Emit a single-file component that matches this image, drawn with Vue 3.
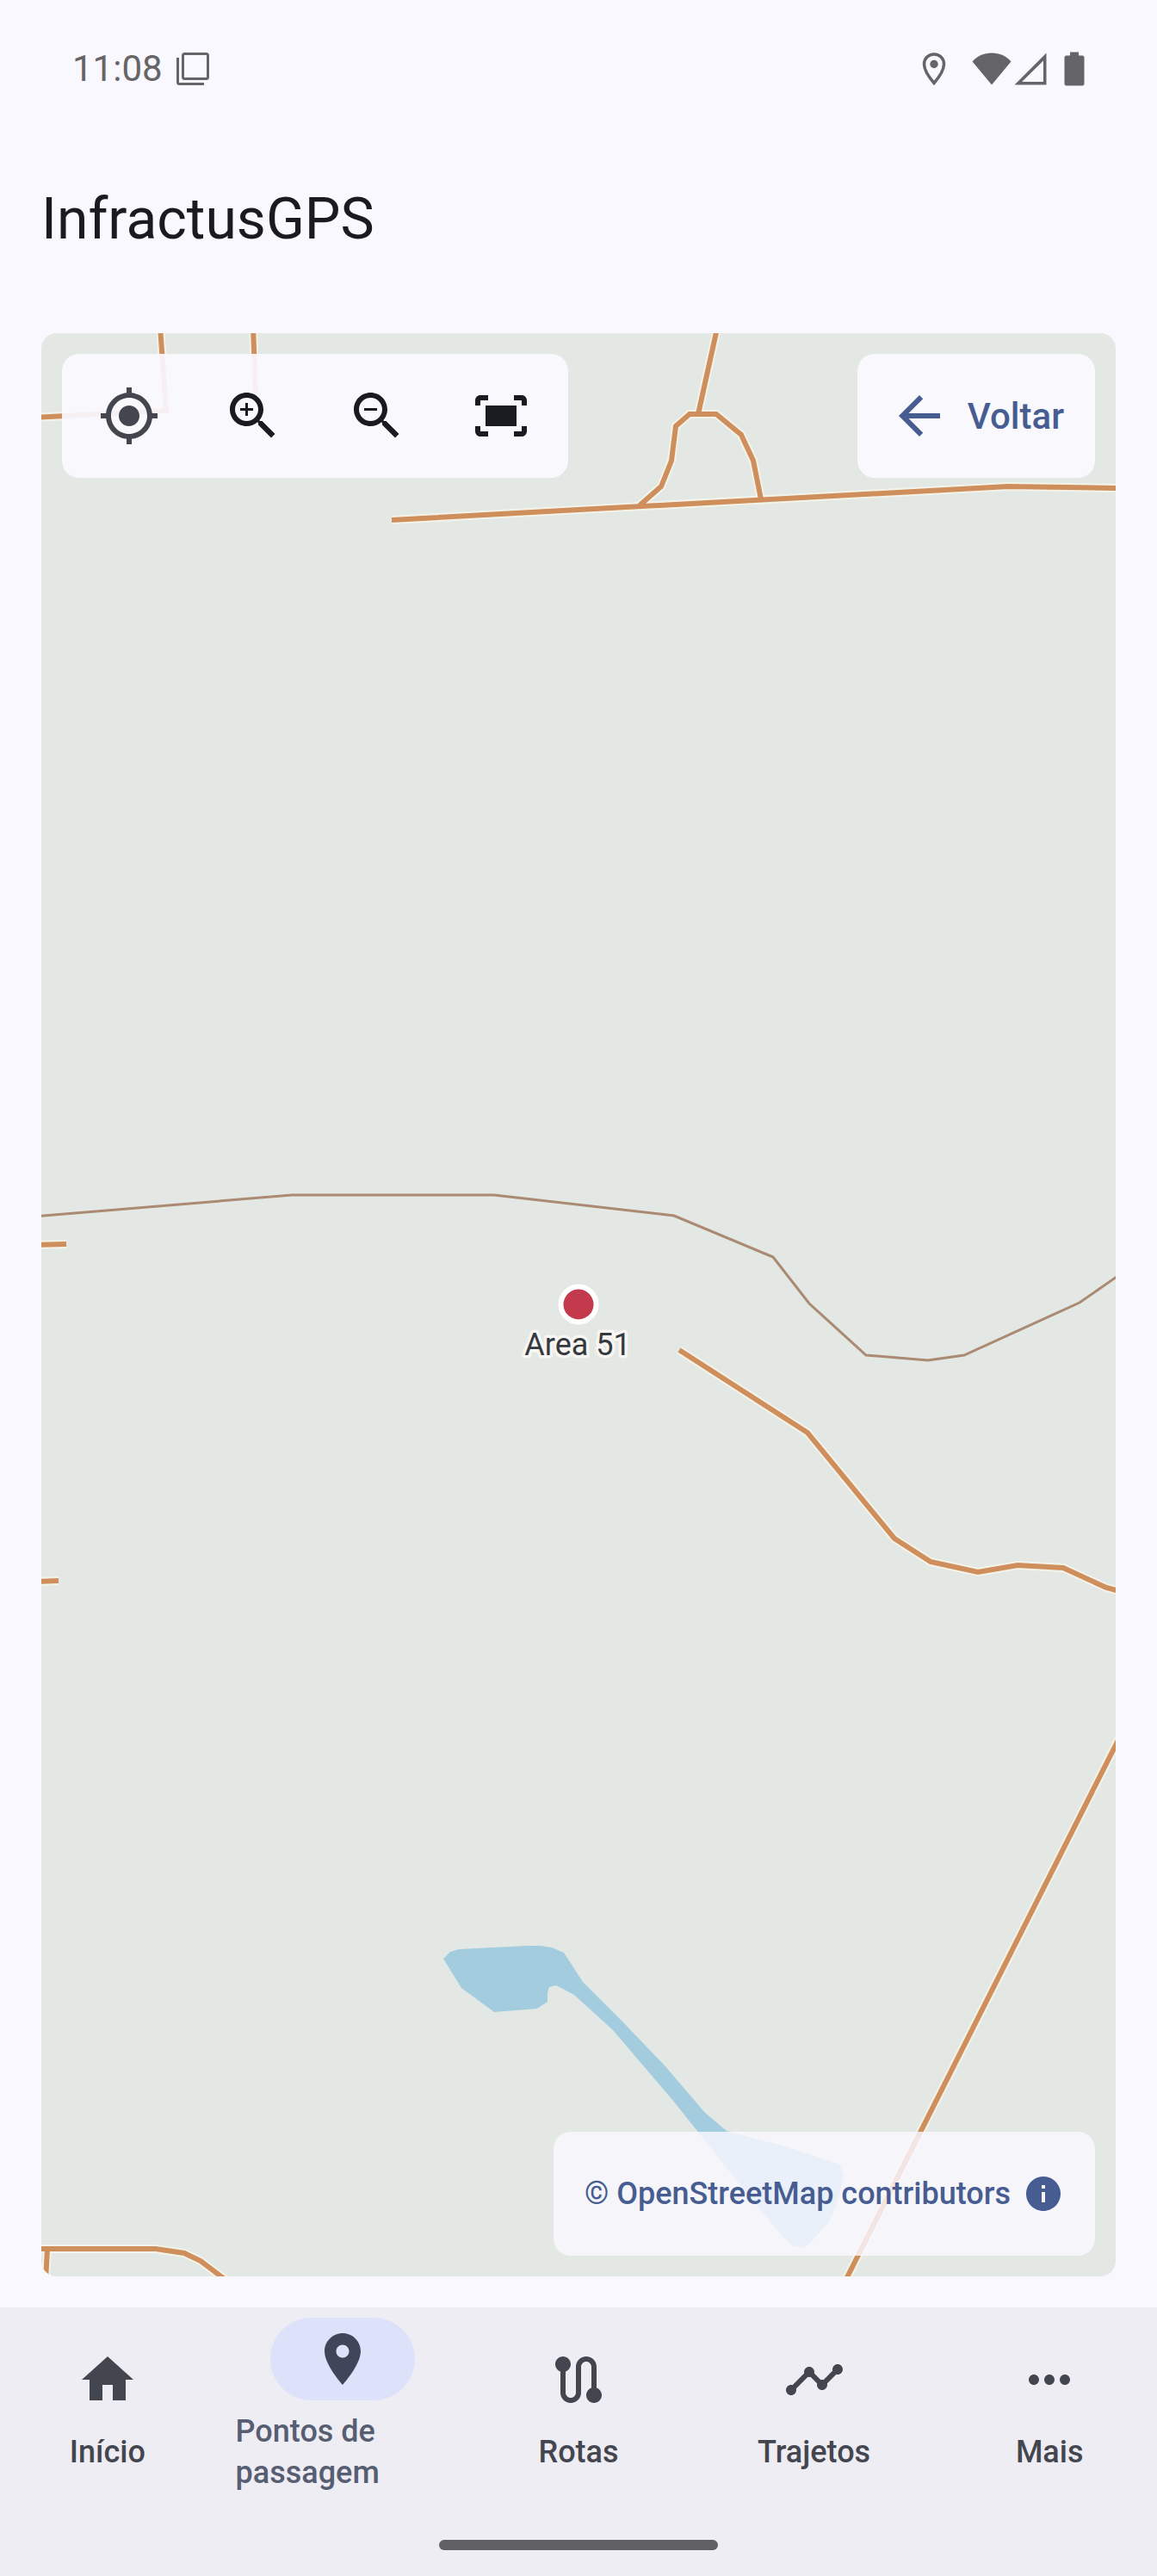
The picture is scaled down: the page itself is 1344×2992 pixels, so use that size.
<template>
  <div class="app">
    <div class="status-bar">
      <div class="status-left">
        <time>11:08</time>
        <svg width="38" height="38" viewBox="0 0 38 38" aria-hidden="true">
          <rect x="7.5" y="1.5" width="29" height="29" rx="2" fill="none" stroke="currentColor" stroke-width="3" />
          <path d="M1.5 6v28.5a2 2 0 0 0 2 2H32" fill="none" stroke="currentColor" stroke-width="3" />
        </svg>
      </div>
      <div class="status-right">
        <svg class="gps" width="28" height="38" viewBox="0 0 28 38" aria-hidden="true">
          <path d="M14 2C7.4 2 2.5 7 2.5 13.5 2.5 21 8 28.500 14 35.5 20 28.5 25.5 21 25.5 13.5 25.5 7 20.6 2 14 2z" fill="none" stroke="currentColor" stroke-width="3.5" />
          <circle cx="14" cy="13.5" r="4.7" fill="currentColor" />
        </svg>
        <svg width="46" height="38" viewBox="0 0 46 38" aria-hidden="true">
          <path d="M23 37.5 0.5 10.5C6 4 14 0.5 23 0.5s17 3.5 22.500 10z" fill="currentColor" />
        </svg>
        <svg class="signal" width="38" height="38" viewBox="0 0 38 38" aria-hidden="true">
          <path d="M37.5 0.5v37H0.5zM34 9.5 9 34h25z" fill="currentColor" fill-rule="evenodd" />
        </svg>
        <svg width="24" height="40" viewBox="0 0 24 40" aria-hidden="true">
          <path d="M7 0.5h10V4.5h4a2.5 2.5 0 0 1 2.5 2.5v30a2.5 2.5 0 0 1-2.5 2.5H3A2.5 2.5 0 0 1 0.5 37V7A2.5 2.5 0 0 1 3 4.5h4z" fill="currentColor" />
        </svg>
      </div>
    </div>

    <header class="top-bar">
      <h1>InfractusGPS</h1>
    </header>

    <main class="content">
      <div class="map">
        <svg class="map-canvas" viewBox="48 387 1248 2257" preserveAspectRatio="xMidYMid slice" role="img" aria-label="Area 51">
          <polygon class="water" :points="water" />
          <polyline class="track" :points="track" />
          <polyline v-for="(road, i) in roads" :key="'c' + i" class="road-casing" :points="road" />
          <polyline v-for="(road, i) in roads" :key="'r' + i" class="road" :points="road" />
          <circle class="marker" cx="672" cy="1515" r="20.5" />
          <text class="marker-label" x="671" y="1574">Area 51</text>
        </svg>

        <div class="map-top">
          <div class="panel tools">
            <button
              v-for="tool in tools"
              :key="tool.label"
              type="button"
              class="tool"
              :class="{ muted: tool.muted }"
              :aria-label="tool.label"
              @click="tool.action"
            >
              <svg class="icon" viewBox="0 0 24 24"><path :d="tool.icon" /></svg>
            </button>
          </div>
          <button type="button" class="panel back">
            <svg class="icon" viewBox="0 0 24 24">
              <path d="M20 11H7.83l5.59-5.59L12 4l-8 8 8 8 1.41-1.41L7.83 13H20v-2z" />
            </svg>
            Voltar
          </button>
        </div>

        <a class="panel attribution" href="#">
          <span>© OpenStreetMap contributors</span>
          <svg class="icon-small" viewBox="0 0 24 24">
            <path d="M12 2C6.48 2 2 6.48 2 12s4.48 10 10 10 10-4.48 10-10S17.52 2 12 2zm1 15h-2v-6h2v6zm0-8h-2V7h2v2z" />
          </svg>
        </a>
      </div>
    </main>

    <footer class="bottom">
      <nav class="nav">
        <a
          v-for="item in items"
          :key="item.label"
          href="#"
          class="nav-item"
          :class="{ active: current === item.label }"
          @click.prevent="current = item.label"
        >
          <span class="indicator">
            <svg class="icon" viewBox="0 0 24 24"><path :d="item.icon" /></svg>
          </span>
          <span class="nav-label">{{ item.label }}</span>
        </a>
      </nav>
      <div class="gesture"><span class="gesture-handle"></span></div>
    </footer>
  </div>
</template>

<script setup>
import { ref } from 'vue'

const current = ref('Pontos de passagem')
const zoom = ref(14)

const lens =
  'M15.5 14h-.79l-.28-.27C15.41 12.59 16 11.11 16 9.5 16 5.91 13.09 3 9.5 3S3 5.91 3 9.5 5.91 16 9.5 16c1.61 0 3.09-.59 4.23-1.57l.27.28v.79l5 4.99L20.49 19l-4.99-5zm-6 0C7.01 14 5 11.99 5 9.5S7.01 5 9.5 5 14 7.01 14 9.5 11.99 14 9.5 14z'

const tools = [
  {
    label: 'Localização',
    muted: true,
    action: () => {},
    icon: 'M12 8c-2.21 0-4 1.79-4 4s1.79 4 4 4 4-1.79 4-4-1.79-4-4-4zm8.94 3c-.46-4.17-3.77-7.48-7.94-7.94V1h-2v2.06C6.83 3.52 3.52 6.83 3.06 11H1v2h2.06c.46 4.17 3.77 7.48 7.94 7.94V23h2v-2.06c4.17-.46 7.48-3.77 7.94-7.94H23v-2h-2.06zM12 19c-3.87 0-7-3.13-7-7s3.13-7 7-7 7 3.13 7 7-3.13 7-7 7z'
  },
  { label: 'Aproximar', action: () => zoom.value++, icon: lens + 'M12 10h-2v2H9v-2H7V9h2V7h1v2h2v1z' },
  { label: 'Afastar', action: () => zoom.value--, icon: lens + 'M7 9h5v1H7z' },
  {
    label: 'Ajustar',
    action: () => (zoom.value = 14),
    icon: 'M17 4h3c1.1 0 2 .9 2 2v2h-2V6h-3V4zM4 8V6h3V4H4c-1.1 0-2 .9-2 2v2h2zm16 8v2h-3v2h3c1.1 0 2-.9 2-2v-2h-2zM7 18H4v-2H2v2c0 1.1.9 2 2 2h3v-2zM18 8H6v8h12V8z'
  }
]

const items = [
  { label: 'Início', icon: 'M10 20v-6h4v6h5v-8h3L12 3 2 12h3v8z' },
  {
    label: 'Pontos de passagem',
    icon: 'M12 2C8.13 2 5 5.13 5 9c0 5.25 7 13 7 13s7-7.75 7-13c0-3.87-3.13-7-7-7zm0 9.5c-1.38 0-2.5-1.12-2.5-2.5s1.12-2.5 2.5-2.5 2.5 1.12 2.5 2.5-1.12 2.5-2.5 2.5z'
  },
  {
    label: 'Rotas',
    icon: 'M19 15.18V7c0-2.21-1.79-4-4-4s-4 1.79-4 4v10c0 1.1-.9 2-2 2s-2-.9-2-2V8.82C8.16 8.4 9 7.3 9 6c0-1.66-1.34-3-3-3S3 4.34 3 6c0 1.3.84 2.4 2 2.82V17c0 2.21 1.79 4 4 4s4-1.79 4-4V7c0-1.1.9-2 2-2s2 .9 2 2v8.18c-1.16.41-2 1.51-2 2.82 0 1.66 1.34 3 3 3s3-1.34 3-3c0-1.3-.84-2.4-2-2.82z'
  },
  {
    label: 'Trajetos',
    icon: 'M23 8c0 1.1-.9 2-2 2-.18 0-.35-.02-.51-.07l-3.56 3.55c.05.16.07.34.07.52 0 1.1-.9 2-2 2s-2-.9-2-2c0-.18.02-.36.07-.52l-2.55-2.55c-.16.05-.34.07-.52.07s-.36-.02-.52-.07l-4.55 4.56c.05.16.07.33.07.51 0 1.1-.9 2-2 2s-2-.9-2-2 .9-2 2-2c.18 0 .35.02.51.07l4.56-4.55C8.02 9.36 8 9.18 8 9c0-1.1.9-2 2-2s2 .9 2 2c0 .18-.02.36-.07.52l2.55 2.55c.16-.05.34-.07.52-.07s.36.02.52.07l3.55-3.56C19.02 8.35 19 8.18 19 8c0-1.1.9-2 2-2s2 .9 2 2z'
  },
  {
    label: 'Mais',
    icon: 'M6 10c-1.1 0-2 .9-2 2s.9 2 2 2 2-.9 2-2-.9-2-2-2zm12 0c-1.1 0-2 .9-2 2s.9 2 2 2 2-.9 2-2-.9-2-2-2zm-6 0c-1.1 0-2 .9-2 2s.9 2 2 2 2-.9 2-2-.9-2-2-2z'
  }
]

// map geometry
const roads = [
  '186,380 193,477 40,485',
  '294,380 297,457',
  '455,604 672,592 1171,565 1300,567',
  '834,377 811,481',
  '743,587 768,565 780,535 785,495 801,481 832,481 861,505 875,535 884,580',
  '40,1446 77,1445',
  '40,1837 68,1836',
  '789,1568 938,1664 1039,1787 1081,1814 1136,1826 1182,1818 1235,1821 1285,1844 1300,1848',
  '1300,2019 980,2653',
  '40,2612 181,2612 214,2617 233,2626 266,2651',
  '55,2612 53,2650'
]

const track =
  '40,1413 339,1388 574,1388 783,1412 898,1460 940,1514 1006,1574 1078,1580 1120,1574 1254,1513 1300,1481'

const water =
  '515,2275 523,2267 533,2264 613,2260 628,2260 641,2262 655,2268 677,2302 725,2350 772,2399 819,2454 844,2475 916,2494 976,2514 980,2528 973,2557 963,2581 944,2602 934,2611 921,2609 909,2598 864,2543 782,2440 712,2358 667,2317 646,2306 638,2308 636,2315 636,2325 624,2333 574,2337 536,2309'
</script>

<style>
body {
  margin: 0;
  background: #faf8ff;
}
</style>

<style scoped>
.app {
  display: flex;
  flex-direction: column;
  min-height: 100vh;
  background: #faf8ff;
  color: #1a1b20;
  font-family: Roboto, sans-serif;
}

.status-bar {
  display: flex;
  justify-content: space-between;
  align-items: center;
  height: 159px;
  padding: 0 84px;
  color: #656567;
}

.status-left,
.status-right {
  display: flex;
  align-items: center;
}

.status-left {
  gap: 16px;
  font-size: 42px;
  line-height: 48px;
}

.gps {
  margin-right: 30px;
}

.signal {
  margin: 0 20px 0 3px;
}

.top-bar {
  display: flex;
  align-items: center;
  height: 192px;
  padding: 0 48px;
}

.top-bar h1 {
  margin: 0;
  font-size: 66px;
  font-weight: 400;
  line-height: 84px;
}

.content {
  display: flex;
  flex: 1;
  padding: 36px 48px;
}

.map {
  position: relative;
  display: flex;
  flex: 1;
  flex-direction: column;
  justify-content: space-between;
  padding: 24px;
  overflow: hidden;
  border-radius: 18px;
  background: #e3e8e4;
}

.map-canvas {
  position: absolute;
  top: 0;
  left: 0;
  width: 100%;
  height: 100%;
}

.water {
  fill: #a3cddf;
}

.track {
  fill: none;
  stroke: #aa8a73;
  stroke-width: 3;
}

.road-casing {
  fill: none;
  stroke: #f4f3ea;
  stroke-width: 10;
}

.road {
  fill: none;
  stroke: #cf8f5c;
  stroke-width: 6;
}

.marker {
  fill: #c23a4b;
  stroke: #ffffff;
  stroke-width: 6;
}

.marker-label {
  fill: #33393e;
  stroke: #f8f5f2;
  stroke-width: 7;
  stroke-linejoin: round;
  paint-order: stroke;
  font-size: 36px;
  text-anchor: middle;
}

.map-top {
  display: flex;
  justify-content: space-between;
}

.panel {
  position: relative;
  display: flex;
  align-items: center;
  height: 144px;
  border: 0;
  border-radius: 20px;
  background: rgba(250, 248, 255, 0.92);
}

.tools {
  padding: 0 6px;
}

.tool {
  display: flex;
  align-items: center;
  justify-content: center;
  width: 144px;
  height: 144px;
  padding: 0;
  border: 0;
  background: none;
  color: #1a1b20;
}

.muted {
  color: #44464f;
}

.icon {
  width: 72px;
  height: 72px;
  fill: currentColor;
}

.icon-small {
  width: 48px;
  height: 48px;
  fill: currentColor;
}

.back {
  gap: 20px;
  padding: 0 36px;
  color: #475d92;
  font-family: inherit;
  font-size: 42px;
  font-weight: 500;
}

.attribution {
  align-self: flex-end;
  gap: 14px;
  padding: 0 36px;
  background: rgba(250, 248, 255, 0.82);
  color: #475d92;
  font-size: 36px;
  font-weight: 500;
  text-decoration: none;
}

.bottom {
  background: #eeedf4;
}

.nav {
  display: grid;
  grid-template-columns: repeat(5, 1fr);
  gap: 24px;
  padding: 12px 0;
}

.nav-item {
  display: flex;
  flex-direction: column;
  align-items: center;
  justify-content: center;
  gap: 12px;
  color: #44464f;
  font-size: 36px;
  font-weight: 500;
  line-height: 48px;
  text-decoration: none;
}

.indicator {
  display: flex;
  align-items: center;
  justify-content: center;
  width: 168px;
  height: 96px;
  border-radius: 48px;
}

.active {
  color: #575e71;
}

.active .indicator {
  background: #dce2f9;
  color: #404659;
}

.gesture {
  display: flex;
  align-items: flex-end;
  justify-content: center;
  height: 54px;
  padding-bottom: 30px;
}

.gesture-handle {
  width: 324px;
  height: 12px;
  border-radius: 6px;
  background: #606062;
}
</style>
